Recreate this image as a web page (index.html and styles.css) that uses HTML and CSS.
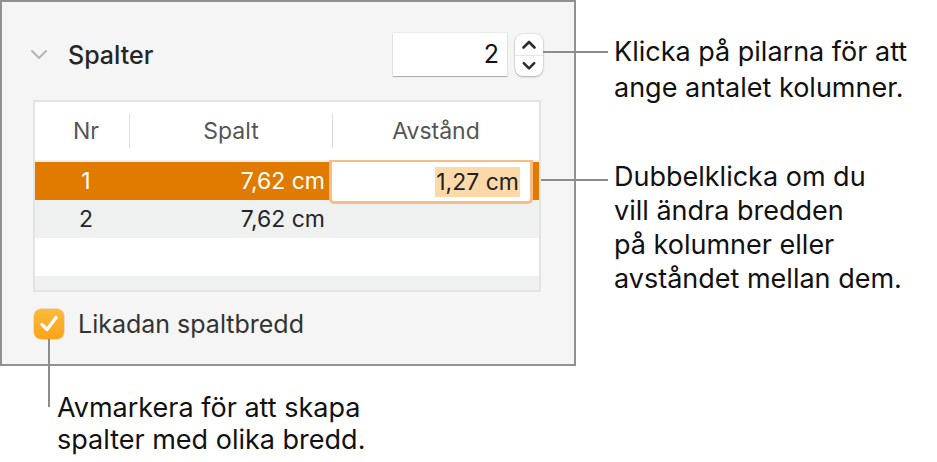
FILE: index.html
```html
<!DOCTYPE html>
<html lang="sv">
<head>
  <meta charset="UTF-8" />
  <title>Spalter</title>
  <link rel="stylesheet" href="styles.css">
</head>
<body>
  <div class="figure">
    <div class="top">
      <section class="panel">
        <div class="panel-head">
          <svg class="disclosure" width="18" height="11" viewBox="0 0 18 11">
            <path d="M2 2 L9 9 L16 2" fill="none" stroke="#b4b4b4" stroke-width="2" stroke-linecap="round" stroke-linejoin="round"/>
          </svg>
          <span class="title">Spalter</span>
          <div class="stepper">
            <div class="stepper-field">2</div>
            <div class="stepper-arrows">
              <svg width="28" height="21" viewBox="0 0 28 21">
                <path d="M8.5 13.5 L14 8 L19.5 13.5" fill="none" stroke="#2b2b2b" stroke-width="2.6" stroke-linecap="round" stroke-linejoin="round"/>
              </svg>
              <svg width="28" height="21" viewBox="0 0 28 21">
                <path d="M8.5 7.5 L14 13 L19.5 7.5" fill="none" stroke="#2b2b2b" stroke-width="2.6" stroke-linecap="round" stroke-linejoin="round"/>
              </svg>
            </div>
          </div>
        </div>

        <div class="table">
          <div class="row head">
            <div class="cell nr">Nr</div>
            <div class="cell"><span class="divider">Spalt</span></div>
            <div class="cell"><span class="divider">Avstånd</span></div>
          </div>
          <div class="row selected">
            <div class="cell nr">1</div>
            <div class="cell num">7,62 cm</div>
            <div class="cell edit">
              <div class="edit-field"><span class="sel">1,27 cm</span></div>
            </div>
          </div>
          <div class="row alt">
            <div class="cell nr">2</div>
            <div class="cell num">7,62 cm</div>
            <div class="cell"></div>
          </div>
          <div class="row"></div>
          <div class="row alt"></div>
        </div>

        <div class="check">
          <span class="box">
            <svg width="30" height="30" viewBox="0 0 30 30">
              <path d="M8 15.5 L13 20.5 L22 8.5" fill="none" stroke="#fff" stroke-width="3.4" stroke-linecap="round" stroke-linejoin="round"/>
            </svg>
          </span>
          <span class="check-label">Likadan spaltbredd</span>
        </div>
      </section>

      <div class="notes-right">
        <p class="note note-stepper">Klicka på pilarna för att<br>ange antalet kolumner.</p>
        <p class="note note-table">Dubbelklicka om du<br>vill ändra bredden<br>på kolumner eller<br>avståndet mellan dem.</p>
      </div>
    </div>

    <p class="note note-check">Avmarkera för att skapa<br>spalter med olika bredd.</p>

    <!-- callout leader lines -->
    <span class="leader leader-stepper"></span>
    <span class="leader leader-table"></span>
    <span class="leader leader-check"></span>
  </div>
</body>
</html>
```

FILE: styles.css
```css
body {
  margin: 0;
  background: #fff;
  font-family: Inter, "Noto Sans", sans-serif;
  color: #1a1a1a;
}
.figure {
  position: relative;
  width: 937px;
  height: 462px;
}
.top {
  display: flex;
  gap: 38px;
}
.panel {
  box-sizing: border-box;
  width: 576px;
  height: 366px;
  background: #f5f5f5;
  border: 2px solid #919191;
}
.panel-head {
  display: flex;
  align-items: center;
  height: 45px;
  padding: 30px 31px 0 28px;
  margin-bottom: 23px;
}
.disclosure {
  margin-right: 20px;
}
.title {
  font-size: 25px;
  font-weight: 500;
  color: #262626;
}
.stepper {
  margin-left: auto;
  display: flex;
  align-items: center;
  gap: 8px;
}
.stepper-field {
  box-sizing: border-box;
  width: 114px;
  height: 43px;
  background: #fff;
  box-shadow: 0 1px 1px rgba(0,0,0,0.25), 0 0 0 0.5px rgba(0,0,0,0.08);
  text-align: right;
  padding-right: 8px;
  font-size: 25px;
  line-height: 43px;
  color: #111;
}
.stepper-arrows {
  width: 28px;
  height: 42px;
  display: flex;
  flex-direction: column;
  background: #fff;
  border-radius: 8px;
  box-shadow: 0 1px 2px rgba(0,0,0,0.25), 0 0 0 0.5px rgba(0,0,0,0.12);
}
.stepper-arrows svg + svg {
  border-top: 1px solid #e6e6e6;
  height: 20px;
}
.table {
  box-sizing: border-box;
  width: 508px;
  height: 192px;
  margin-left: 31px;
  border: 2px solid #e3e3e3;
  background: #fff;
  overflow: hidden;
}
.row {
  display: grid;
  grid-template-columns: 94px 203px 1fr;
  align-items: center;
  height: 38px;
  font-size: 23px;
  color: #262626;
}
.row.head {
  height: 58px;
  border-bottom: 2px solid #f0f0f0;
  color: #555;
  text-align: center;
}
.divider {
  display: block;
  border-left: 1px solid #dcdcdc;
  line-height: 34px;
}
.nr {
  text-align: center;
  padding-left: 8px;
}
.num {
  text-align: right;
  padding-right: 7px;
}
.row.alt {
  background: #eff1f1;
}
.row.selected {
  background: #e07b00;
  color: #fff;
}
.cell.edit {
  align-self: stretch;
  display: flex;
}
.edit-field {
  box-sizing: border-box;
  flex: 1;
  margin: -2px 6px -4px -3px;
  background: #fff;
  border: 3px solid #f6bd85;
  border-top-width: 2px;
  border-radius: 0 0 5px 5px;
  display: flex;
  align-items: center;
  justify-content: flex-end;
  padding-right: 10px;
  color: #222;
}
.sel {
  background: #fdd8a8;
  padding: 1px 1px;
}
.check {
  display: flex;
  align-items: center;
  margin: 17px 0 0 32px;
}
.box {
  width: 30px;
  height: 30px;
  border-radius: 7px;
  background: linear-gradient(#fdba3a, #f8a41a);
  box-shadow: 0 0 0 0.5px rgba(200,120,0,0.4);
}
.box svg {
  display: block;
}
.check-label {
  margin-left: 14px;
  font-size: 25px;
  color: #333;
}
.note {
  margin: 0;
  font-size: 27px;
  color: #111;
}
.note-stepper {
  margin-top: 34px;
  line-height: 36px;
}
.note-table {
  margin-top: 54px;
  line-height: 34px;
}
.note-check {
  margin: 26px 0 0 57px;
  line-height: 32px;
}
.leader {
  position: absolute;
  background: #8c8c8c;
}
.leader-stepper {
  left: 543px;
  top: 51px;
  width: 65px;
  height: 2px;
}
.leader-table {
  left: 541px;
  top: 179px;
  width: 67px;
  height: 2px;
}
.leader-check {
  left: 48px;
  top: 339px;
  width: 2px;
  height: 68px;
}
```
